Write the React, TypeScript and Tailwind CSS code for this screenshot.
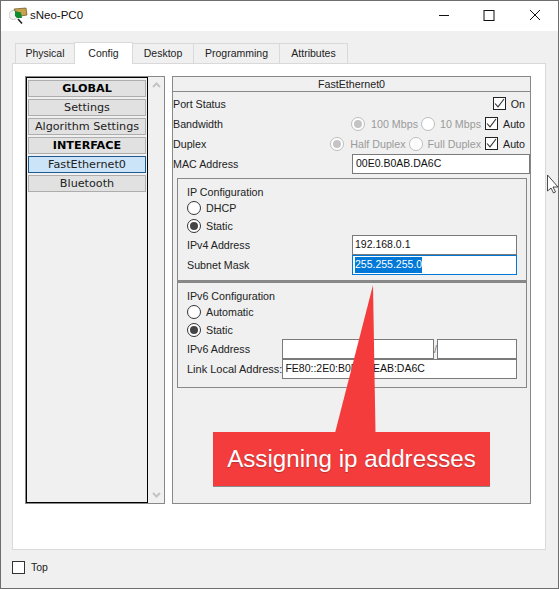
import React from "react";

const Check = () => (
  <span className="flex h-[13px] w-[13px] items-center justify-center border border-[#222] bg-white">
    <svg width="11" height="11" viewBox="0 0 11 11" fill="none" stroke="#333" strokeWidth="1.1">
      <path d="M1 5.5 L4 8.8 L10 1" />
    </svg>
  </span>
);

const Radio = ({ on = false, dim = false }: { on?: boolean; dim?: boolean }) => (
  <span className={`flex h-[14px] w-[14px] shrink-0 items-center justify-center rounded-full border bg-white ${dim ? "border-[#bdbdbd]" : "border-[#333]"}`}>
    {on && <span className={`h-[8px] w-[8px] rounded-full ${dim ? "bg-[#c4c4c4]" : "bg-[#444]"}`} />}
  </span>
);

const Field = ({ w, value, selected = false, active = false }: { w: string; value?: string; selected?: boolean; active?: boolean }) => (
  <div className={`flex h-[20px] items-center border bg-white pl-[2px] text-[10.5px] text-[#111] ${w} ${active ? "border-[#0078d7]" : "border-[#7a7a7a]"}`}>
    {selected ? <span className="bg-[#0078d7] text-white">{value}</span> : value}
  </div>
);

const ListItem = ({ label, bold = false, active = false }: { label: string; bold?: boolean; active?: boolean }) => (
  <div
    className={`flex h-[17px] items-center justify-center border text-[11.2px] leading-none text-[#222] ${
      active ? "border-[#1c5a8f] bg-[#cce4f7]" : "border-[#adadad] bg-[#e1e1e1]"
    } ${bold ? "font-bold text-black" : ""}`}
  >
    {label}
  </div>
);

const Tab = ({ label, w, active = false }: { label: string; w: string; active?: boolean }) => (
  <div
    className={`flex items-center justify-center border border-[#d9d9d9] ${w} ${
      active ? "relative z-10 -mb-px -mr-px h-[22px] border-b-0 bg-white" : "-mr-px h-[20px] border-b-0 bg-[#f0f0f0] pt-[1px]"
    }`}
  >
    {label}
  </div>
);

const Row = ({ label, children }: { label: string; children?: React.ReactNode }) => (
  <div className="flex h-[20px] items-center justify-between">
    <span>{label}</span>
    {children}
  </div>
);

export default function App() {
  return (
    <div
      className="relative flex h-[589px] w-[559px] flex-col border border-[#6e6e6e] bg-[#f0f0f0] text-[10.7px] text-[#222]"
      style={{ fontFamily: '"Liberation Sans", Arial, sans-serif' }}
    >
      {/* title bar */}
      <div className="flex h-[30px] shrink-0 items-center bg-white pl-[8px] text-[11.5px] text-[#111]">
        <svg width="19" height="19" viewBox="0 0 19 19" className="mr-[2px]">
          <circle cx="4.5" cy="8" r="4.5" fill="#f4f4f4" stroke="#c8c8c8" />
          <path d="M9 12 L13 16.5" stroke="#222" strokeWidth="1.6" />
          <path d="M5 2 L17 1 L18 8 L12 9 L6 4 Z" fill="#c9a24c" stroke="#5f4f1c" strokeWidth="0.7" />
          <path d="M6 4 L12 5.5 L13 11 L8 11 L6 9 Z" fill="#0f8a2f" />
        </svg>
        <span>sNeo-PC0</span>
        <div className="ml-auto flex items-center">
          <svg width="46" height="30" viewBox="0 0 46 30" stroke="#111" fill="none">
            <path d="M20 14.5 H30" />
          </svg>
          <svg width="46" height="30" viewBox="0 0 46 30" stroke="#111" fill="none">
            <rect x="19" y="9.5" width="10" height="10" />
          </svg>
          <svg width="46" height="30" viewBox="0 0 46 30" stroke="#111" fill="none" className="mr-[1px]">
            <path d="M19 9 L29 19 M29 9 L19 19" />
          </svg>
        </div>
      </div>

      {/* body */}
      <div className="flex min-h-0 flex-1 flex-col px-[11px] pt-[11px]">
        <div className="flex h-[21px] items-end pl-[3px] text-[10.5px]">
          <Tab label="Physical" w="w-[60px]" />
          <Tab label="Config" w="w-[59px]" active />
          <Tab label="Desktop" w="w-[62px]" />
          <Tab label="Programming" w="w-[87px]" />
          <Tab label="Attributes" w="w-[69px]" />
        </div>

        <div className="flex h-[487px] w-[534px] gap-[7px] border border-[#d9d9d9] bg-white pl-[12px] pr-[14px] pt-[12px]">
          {/* left list */}
          <div className="flex h-[428px] w-[140px] shrink-0 border border-[#888] bg-[#f0f0f0]">
            <div
              className="flex w-[122px] flex-col gap-[2px] border border-black px-[1px] pt-[2px]"
              style={{ fontFamily: '"DejaVu Sans", Verdana, sans-serif' }}
            >
              <ListItem label="GLOBAL" bold />
              <ListItem label="Settings" />
              <ListItem label="Algorithm Settings" />
              <ListItem label="INTERFACE" bold />
              <ListItem label="FastEthernet0" active />
              <ListItem label="Bluetooth" />
            </div>
            <div className="flex flex-1 flex-col items-center justify-between py-[4px]">
              <svg width="9" height="7" viewBox="0 0 9 7" fill="none" stroke="#c4c4c4" strokeWidth="2">
                <path d="M1 6 L4.5 2.5 L8 6" />
              </svg>
              <svg width="9" height="7" viewBox="0 0 9 7" fill="none" stroke="#c4c4c4" strokeWidth="2">
                <path d="M1 1 L4.5 4.5 L8 1" />
              </svg>
            </div>
          </div>

          {/* right panel */}
          <div className="flex h-[428px] w-[359px] shrink-0 flex-col border border-[#888] bg-[#f0f0f0]">
            <div className="flex h-[15px] shrink-0 items-center justify-center border-b border-[#888]">FastEthernet0</div>
            <div className="flex flex-col pt-[2px]">
              <Row label="Port Status">
                <div className="flex items-center gap-[5px] pr-[5px]">
                  <Check />
                  <span>On</span>
                </div>
              </Row>
              <Row label="Bandwidth">
                <div className="flex items-center pr-[5px]">
                  <Radio on dim />
                  <span className="ml-[6px] text-[#9a9a9a]">100 Mbps</span>
                  <span className="ml-[3px]"><Radio dim /></span>
                  <span className="ml-[5px] text-[#9a9a9a]">10 Mbps</span>
                  <span className="ml-[4px]"><Check /></span>
                  <span className="ml-[5px]">Auto</span>
                </div>
              </Row>
              <Row label="Duplex">
                <div className="flex items-center pr-[5px]">
                  <Radio on dim />
                  <span className="ml-[6px] text-[#9a9a9a]">Half Duplex</span>
                  <span className="ml-[3px]"><Radio dim /></span>
                  <span className="ml-[5px] text-[#9a9a9a]">Full Duplex</span>
                  <span className="ml-[4px]"><Check /></span>
                  <span className="ml-[5px]">Auto</span>
                </div>
              </Row>
              <Row label="MAC Address">
                <Field w="w-[178px] pl-[3px]" value="00E0.B0AB.DA6C" />
              </Row>
            </div>

            <div className="mx-[4px] mt-[4px] flex h-[103px] w-[350px] flex-col border border-[#888] pl-[9px] pr-[9px] pt-[7px]">
              <div className="h-[13px] leading-[13px]">IP Configuration</div>
              <div className="mt-[1px] flex h-[16px] items-center gap-[5px]"><Radio /><span>DHCP</span></div>
              <div className="mt-[2px] flex h-[16px] items-center gap-[5px]"><Radio on /><span>Static</span></div>
              <div className="mt-[1px] flex h-[20px] items-center justify-between"><span>IPv4 Address</span><Field w="w-[165px]" value="192.168.0.1" /></div>
              <div className="flex h-[20px] items-center justify-between"><span>Subnet Mask</span><Field w="w-[165px]" value="255.255.255.0" selected active /></div>
            </div>

            <div className="mx-[4px] flex h-[107px] w-[350px] flex-col border border-t-2 border-[#888] pl-[9px] pr-[9px] pt-[7px]">
              <div className="h-[13px] leading-[13px]">IPv6 Configuration</div>
              <div className="mt-[1px] flex h-[16px] items-center gap-[5px]"><Radio /><span>Automatic</span></div>
              <div className="mt-[2px] flex h-[16px] items-center gap-[5px]"><Radio on /><span>Static</span></div>
              <div className="mt-[1px] flex h-[20px] items-center justify-between">
                <span>IPv6 Address</span>
                <div className="flex items-center text-[#777]">
                  <Field w="w-[152px]" />
                  <span className="w-[3px] overflow-hidden">/</span>
                  <Field w="w-[80px]" />
                </div>
              </div>
              <div className="flex h-[20px] items-center justify-between">
                <span className="whitespace-nowrap text-[11px]">Link Local Address:</span>
                <Field w="w-[235px] pl-[1px]" value="FE80::2E0:B0FF:FEAB:DA6C" />
              </div>
            </div>
          </div>
        </div>

        <div className="mt-[10px] flex items-center gap-[6px] text-[10.5px]">
          <span className="h-[13px] w-[13px] border border-[#333] bg-white" />
          <span>Top</span>
        </div>
      </div>

      {/* callout annotation */}
      <svg className="absolute left-[-1px] top-[-1px]" width="559" height="589" viewBox="0 0 559 589">
        <polygon points="373,285 375.5,433 335,433" fill="#f43c3c" />
        <path d="M547.5 175 L547.5 191 L551 188 L553.5 193 L555.5 192 L553 187 L558 187 Z" fill="#fff" stroke="#222" strokeWidth="0.8" />
      </svg>
      <div
        className="absolute left-[212px] top-[431px] flex h-[55px] w-[277px] items-center justify-center border-b border-[#8a8a8a] bg-[#f43c3c] text-[24.2px] text-white"
        style={{ textShadow: "0 1px 1px rgba(120,40,40,.5)" }}
      >
        Assigning ip addresses
      </div>
    </div>
  );
}
